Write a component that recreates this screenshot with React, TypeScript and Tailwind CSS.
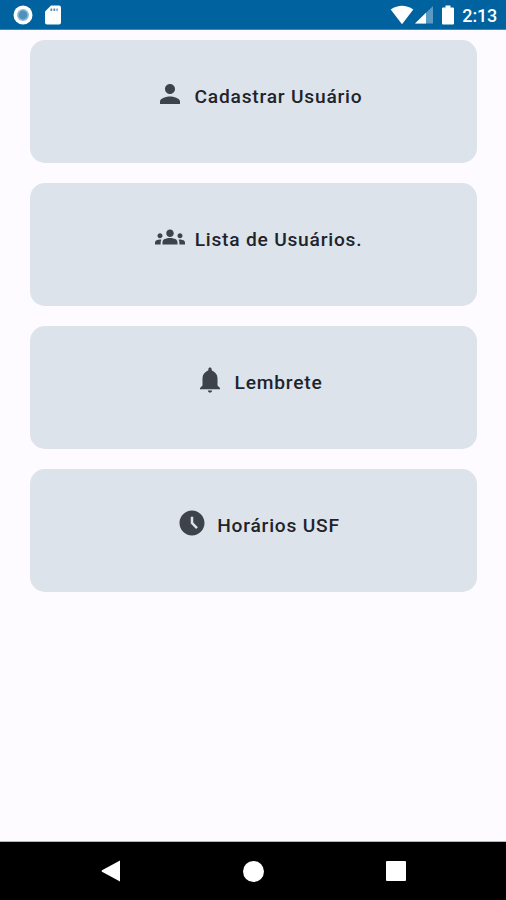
import React from "react";
import { MdAccessTimeFilled, MdGroups, MdPerson } from "react-icons/md";

const StatusBar = () => {
    return (
        <div className="flex h-[30px] shrink-0 items-start justify-between border-b border-[#4d86b4] bg-[#00629e] pl-[13px] pr-[9px]">
            <div className="flex h-[30px] items-center gap-[12px]">
                <svg width="20" height="20" viewBox="0 0 20 20">
                    <circle cx="10" cy="10" r="9.5" fill="#fff" />
                    <circle cx="10" cy="10" r="6" fill="#8fbbd6" />
                    <circle cx="10" cy="10" r="4.4" fill="#4d92bd" />
                </svg>
                <svg width="16" height="20" viewBox="0 0 16 20">
                    <path d="M6 0.5h8q2 0 2 2v15q0 2-2 2H2q-2 0-2-2V6.5z" fill="#fff" />
                    <path d="M5.5 3.500h1.700v2.600H5.500zM8.500 3.500h1.700v2.600H8.500zM11.500 3.500h1.200v2.600h-1.200z" fill="#4d86b4" />
                </svg>
            </div>
            <div className="flex h-[30px] items-center">
                <svg width="24" height="20" viewBox="0 0 24 20">
                    <path d="M0.700 4.600Q12-2.900 23.300 4.600L12 19.200z" fill="#fff" />
                </svg>
                <svg className="ml-[1px]" width="18" height="18" viewBox="0 0 18 18">
                    <path d="M18 0v17.500H0z" fill="#5a9ac4" />
                    <path d="M11 6.800v10.700H0z" fill="#fff" />
                </svg>
                <svg className="ml-[9px]" width="12" height="20" viewBox="0 0 12 20">
                    <path d="M3.500 0.500h5v2H11q1 0 1 1v15q0 1-1 1H1q-1 0-1-1v-15q0-1 1-1h2.500z" fill="#fff" />
                </svg>
                <span className="ml-[8px] mt-[2px] text-[18px] font-medium leading-[20px] tracking-[-0.2px] text-white">2:13</span>
            </div>
        </div>
    );
};

const BellIcon = () => {
    return (
        <svg width="30" height="30" viewBox="0 0 24 24" fill="currentColor">
            <path d="M12 22c1 0 1.700-.7 1.700-1.700h-3.400c0 1 .7 1.700 1.700 1.700zM18 16.300V10.500c0-2.900-1.900-5-4.700-6.300V3.300C13.300 2.500 12.700 2 12 2s-1.300.5-1.300 1.300v.9C7.900 5.500 6 7.600 6 10.500v5.800l-2 2v1h16v-1z" />
        </svg>
    );
};

const MenuCard = ({ icon, label }: any) => {
    return (
        <button className="flex h-[122.5px] w-full items-center justify-center rounded-[15px] bg-[#dce3ea] pb-[15px] pl-[10px]">
            <span className="text-[30px] text-[#3d424b]">{icon}</span>
            <span className="ml-[10px] mt-[6px] whitespace-nowrap text-[19.2px] font-medium leading-[24px] tracking-[0.78px] text-[#1f232b]">
                {label}
            </span>
        </button>
    );
};

const NavigationBar = () => {
    return (
        <div className="flex h-[59px] shrink-0 items-center justify-between border-t border-[#b5b5b7] bg-black pl-[101px] pr-[100px]">
            <svg width="20" height="22" viewBox="0 0 20 22">
                <path d="M19 0.500v21L1 11.700q-1-0.700 0-1.400z" fill="#fff" />
            </svg>
            <div className="h-[21px] w-[21px] rounded-full bg-white" />
            <div className="h-[20px] w-[20px] rounded-[1px] bg-white" />
        </div>
    );
};

export default function App() {
    return (
        <div className="flex h-[900px] w-[506px] flex-col overflow-hidden bg-[#fdfbff] font-['Roboto',sans-serif]">
            <StatusBar />
            <div className="flex grow flex-col gap-[20.5px] pl-[30px] pr-[29px] pt-[10px]">
                <MenuCard icon={<MdPerson />} label="Cadastrar Usuário" />
                <MenuCard icon={<MdGroups />} label="Lista de Usuários." />
                <MenuCard icon={<BellIcon />} label="Lembrete" />
                <MenuCard icon={<MdAccessTimeFilled />} label="Horários USF" />
            </div>
            <NavigationBar />
        </div>
    );
}
